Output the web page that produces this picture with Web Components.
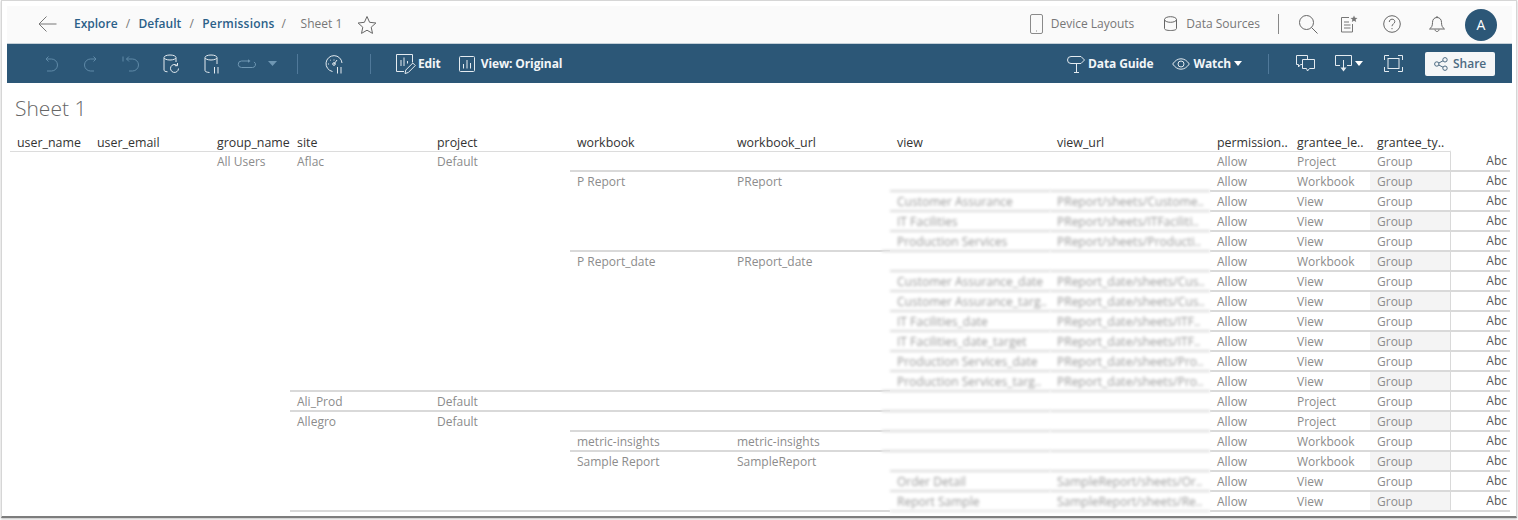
<!DOCTYPE html>
<html>
<head>
<meta charset="utf-8">
<title>Sheet 1</title>
<style>
html, body { margin: 0; background: #fff; height: 520px; overflow: hidden; }
body { font-family: "Open Sans", "Liberation Sans", sans-serif; }
</style>
</head>
<body>
<app-frame>
	<top-bar>
		<ui-icon slot="left" name="back" w="20" h="18" style="margin-left:30px;color:#777"></ui-icon>
		<crumb-trail slot="left" style="margin-left:17px"></crumb-trail>
		<ui-icon slot="left" name="star" w="20" h="20" style="margin:2px 0 0 15px;color:#666"></ui-icon>

		<ui-icon slot="right" name="device" w="13" h="20" style="color:#8a8a8a"></ui-icon>
		<span slot="right" class="lnk" style="margin-left:8px;font-size:12px;color:#777">Device Layouts</span>
		<ui-icon slot="right" name="cylinder" w="13" h="15" style="margin-left:30px;color:#666"></ui-icon>
		<span slot="right" class="lnk" style="margin-left:9px;font-size:12px;color:#777">Data Sources</span>
		<div slot="right" style="margin-left:18px;width:1px;height:20px;background:#888"></div>
		<ui-icon slot="right" name="search" w="20" h="20" style="margin-left:19px;color:#666"></ui-icon>
		<ui-icon slot="right" name="note" w="18" h="18" style="margin-left:22px;color:#777"></ui-icon>
		<ui-icon slot="right" name="help" w="18" h="18" style="margin-left:25px;color:#666"></ui-icon>
		<ui-icon slot="right" name="bell" w="18" h="18" style="margin-left:27px;color:#666"></ui-icon>
		<user-badge slot="right" style="margin:2px 0 0 19px">A</user-badge>
	</top-bar>
	<tool-bar>
		<ui-icon slot="left" name="undo" w="16" h="16" style="margin-left:36px;color:#5f8aa8"></ui-icon>
		<ui-icon slot="left" name="redo" w="16" h="16" style="margin-left:24px;color:#5f8aa8"></ui-icon>
		<ui-icon slot="left" name="revert" w="18" h="16" style="margin-left:23px;color:#5f8aa8"></ui-icon>
		<ui-icon slot="left" name="dbrefresh" w="18" h="20" style="margin-left:23px;color:#e4ebf0"></ui-icon>
		<ui-icon slot="left" name="dbpause" w="16" h="20" style="margin-left:23px;color:#e4ebf0"></ui-icon>
		<ui-icon slot="left" name="pill" w="20" h="10" style="margin-left:17px;color:#6f97b3"></ui-icon>
		<ui-icon slot="left" name="caret" w="9" h="5" style="margin-left:11px;color:#6f97b3"></ui-icon>
		<div slot="left" style="margin-left:20px;width:1px;height:20px;background:#50799a"></div>
		<ui-icon slot="left" name="gauge" w="18" h="20" style="margin-left:27px;color:#e4ebf0"></ui-icon>
		<div slot="left" style="margin-left:27px;width:1px;height:20px;background:#50799a"></div>
		<ui-icon slot="left" name="edit" w="19" h="20" style="margin-left:25px;color:#e4ebf0"></ui-icon>
		<b slot="left" style="margin-left:3px">Edit</b>
		<ui-icon slot="left" name="bars" w="16" h="16" style="margin-left:18px;color:#e4ebf0"></ui-icon>
		<b slot="left" style="margin-left:6px">View: Original</b>

		<ui-icon slot="right" name="sign" w="17" h="18" style="color:#e4ebf0"></ui-icon>
		<b slot="right" style="margin-left:3px">Data Guide</b>
		<ui-icon slot="right" name="eye" w="18" h="12" style="margin-left:19px;color:#e4ebf0"></ui-icon>
		<b slot="right" style="margin-left:3px">Watch</b>
		<ui-icon slot="right" name="caret" w="8" h="5" style="margin-left:3px;color:#fff"></ui-icon>
		<div slot="right" style="margin-left:26px;width:1px;height:20px;background:#50799a"></div>
		<ui-icon slot="right" name="comments" w="19" h="17" style="margin-left:27px;color:#e4ebf0"></ui-icon>
		<ui-icon slot="right" name="download" w="17" h="18" style="margin-left:20px;color:#e4ebf0"></ui-icon>
		<ui-icon slot="right" name="caret" w="8" h="5" style="margin-left:3px;color:#fff"></ui-icon>
		<ui-icon slot="right" name="fit" w="19" h="17" style="margin-left:21px;color:#e4ebf0"></ui-icon>
		<share-button slot="right" style="margin-left:22px">Share</share-button>
	</tool-bar>
	<sheet-view title="Sheet 1">
		<data-table></data-table>
	</sheet-view>
</app-frame>

<script>
const ICONS = {
	back: '<path d="M19.5 9H2M9.5 1.5L2 9l7.5 7.5"/>',
	star: '<path d="M10 1.5l2.6 5.8 6.3.7-4.7 4.2 1.3 6.2L10 15.2l-5.5 3.2 1.3-6.2L1.100 8l6.300-.7z"/>',
	device: '<rect x=".5" y=".5" width="12" height="19" rx="1.500"/><path d="M6 17h1"/>',
	cylinder: '<path d="M.5 3.500v9c0 1.300 2.500 2 6 2s6-.7 6-2v-9"/><ellipse cx="6.500" cy="3.500" rx="6" ry="2.800"/>',
	search: '<circle cx="8.500" cy="8.500" r="7"/><path d="M13.500 13.500l6 6"/>',
	note: '<path d="M9 2.500H1.500v14.500h11V9"/><path d="M4 7h5M4 10h6.500M4 13h6.500"/><path d="M14 .5l1 2.300 2.500.2-1.900 1.600.6 2.400-2.200-1.300-2.200 1.300.6-2.400L10.500 3l2.500-.2z" fill="currentColor" stroke="none"/>',
	help: '<circle cx="9" cy="9" r="8.300"/><path d="M6.300 7c0-1.700 1.200-2.800 2.800-2.800s2.700 1 2.700 2.400c0 2.200-2.800 2.300-2.800 4.600M9 13v1.200"/>',
	bell: '<path d="M9 2.500c-3 0-4.500 2.200-4.500 5 0 3.500-1 5-3 6.500h15c-2-1.500-3-3-3-6.500 0-2.800-1.500-5-4.500-5zM9 1v1.500M7 14.500c0 1.200 1 2 2 2s2-.8 2-2"/>',
	undo: '<path d="M3 3h5.500a6 6 0 0 1 0 12H4"/><path d="M5.500.5L3 3l2.500 2.500" fill="none"/>',
	redo: '<path d="M13 3H7.500a6 6 0 0 0 0 12H11"/><path d="M10.500.5L13 3l-2.500 2.500"/>',
	revert: '<path d="M1 .5v5"/><path d="M4.500 3h6a6 6 0 0 1 0 12H7"/><path d="M7 .5L4.500 3 7 5.500"/>',
	dbrefresh: '<path d="M1 4v12c0 1 1.200 1.600 3.500 1.800M13 4v4"/><ellipse cx="7" cy="3.500" rx="6" ry="2.500"/><path d="M15.500 14.500a4 4 0 1 1-1.300-3M14.500 9v2.700h-2.700"/>',
	dbpause: '<path d="M1 4v12.500c0 1 1.500 1.800 4.500 2M13 4v6"/><ellipse cx="7" cy="3.500" rx="6" ry="2.500"/><path d="M10.500 13v6.500M14 13v6.500"/>',
	pill: '<path d="M12 2H4.500a3 3 0 0 0 0 6.500h11a3 3 0 0 0 1.500-5.600"/><path d="M11 .3L13.500 2 11 3.800" fill="currentColor" stroke="none"/>',
	gauge: '<path d="M7.500 17.500A8 8 0 1 1 17 9"/><path d="M9 5.500v1M4 10H3M5.300 6l.7.7M9 10l3-4"/><circle cx="9" cy="10" r="1.300"/><path d="M12.500 13v6.500M16 13v6.500"/>',
	edit: '<path d="M8 17.500H.5V.5h16v8"/><path d="M5 6v6M8 3.500V12M11.500 7v2.500"/><path d="M9 19.500l.8-3.500 7-7 2.500 2.500-7 7z" fill="none"/>',
	bars: '<rect x=".5" y=".5" width="15" height="15" rx="1"/><path d="M4.500 8v4.500M8 4v8.500M11.500 7v5.500"/>',
	sign: '<path d="M3 1.500h10l3.500 3.500-3.500 3.500H3a3.500 3.500 0 0 1 0-7z"/><path d="M8.500 8.500v9M6 17.500h5"/>',
	eye: '<path d="M.7 6C3 2.500 6 .8 9 .8s6 1.700 8.300 5.200C15 9.500 12 11.200 9 11.200S3 9.500.7 6z"/><circle cx="9" cy="6" r="3"/>',
	comments: '<path d="M6.500 9.500h-2l-2 2.500V9.500h-2V.5h11v4"/><path d="M6.500 4.500h12v9h-5l-2 2.500-1-2.500h-4z"/>',
	download: '<path d="M5 10.500H.5V.5h16v10H12"/><path d="M8.500 5v9"/><path d="M5.500 12.500h6l-3 4z" fill="currentColor" stroke="none"/>',
	fit: '<path d="M.5 5V.5H5M14 .5h4.500V5M18.500 12v4.500H14M5 16.500H.5V12"/><rect x="4" y="3.500" width="11" height="10"/>',
	share: '<circle cx="2.800" cy="7" r="2.200"/><circle cx="11" cy="2.800" r="2.200"/><circle cx="11" cy="11.200" r="2.200"/><path d="M4.800 6l4.200-2.200M4.800 8l4.200 2.200"/>'
};

class UiIcon extends HTMLElement {
	constructor() {
		super();
		this.attachShadow({ mode: 'open' });
	}

	connectedCallback() {
		const w = this.getAttribute('w');
		const h = this.getAttribute('h');
		const name = this.getAttribute('name');
		const body = name === 'caret'
			? `<path d="M0 0h${w}l-${w / 2} ${h}z" fill="currentColor" stroke="none"/>`
			: ICONS[name];
		this.shadowRoot.innerHTML = `
		<style>
		:host { display: block; flex: none; width: ${w}px; height: ${h}px; }
		svg { display: block; overflow: visible; }
		</style>
		<svg width="${w}" height="${h}" viewBox="0 0 ${w} ${h}" fill="none" stroke="currentColor" stroke-width="1">${body}</svg>
		`;
	}
}

class AppFrame extends HTMLElement {
	constructor() {
		super();
		this.attachShadow({ mode: 'open' });
		this.shadowRoot.innerHTML = `
		<style>
		:host {
			display: block;
			box-sizing: border-box;
			margin-left: 1px;
			width: 1516px;
			height: 518px;
			padding: 5px 4px 0 5px;
			background: #fff;
			border: 1px solid #d6d6d6;
			border-bottom: 2px solid #7d7d7d;
			box-shadow: 0 1px 2px rgba(0, 0, 0, 0.25);
		}
		</style>
		<slot></slot>
		`;
	}
}

class TopBar extends HTMLElement {
	constructor() {
		super();
		this.attachShadow({ mode: 'open' });
		this.shadowRoot.innerHTML = `
		<style>
		:host {
			display: flex;
			align-items: center;
			justify-content: space-between;
			box-sizing: border-box;
			height: 38px;
			padding: 0 15px 2px 0;
			background: #fafafa;
			border-bottom: 1px solid #c5d0d8;
		}
		.side { display: flex; align-items: center; }
		</style>
		<div class="side"><slot name="left"></slot></div>
		<div class="side"><slot name="right"></slot></div>
		`;
	}
}

class CrumbTrail extends HTMLElement {
	constructor() {
		super();
		this.attachShadow({ mode: 'open' });
		this.shadowRoot.innerHTML = `
		<style>
		:host { display: flex; align-items: center; font-size: 12px; }
		a { color: #2b6088; font-weight: 600; }
		a:nth-of-type(3) { letter-spacing: 0.2px; }
		i { font-style: normal; color: #777; width: 21px; text-align: center; }
		span { color: #777; margin-left: 8px; }
		i:last-of-type { width: 18px; }
		</style>
		<a>Explore</a><i>/</i><a>Default</a><i>/</i><a>Permissions</a><i>/</i><span>Sheet 1</span>
		`;
	}
}

class UserBadge extends HTMLElement {
	constructor() {
		super();
		this.attachShadow({ mode: 'open' });
		this.shadowRoot.innerHTML = `
		<style>
		:host {
			display: flex;
			align-items: center;
			justify-content: center;
			width: 32px;
			height: 32px;
			border-radius: 50%;
			background: #2c5777;
			color: #fff;
			font-size: 14px;
		}
		</style>
		<slot></slot>
		`;
	}
}

class ToolBar extends HTMLElement {
	constructor() {
		super();
		this.attachShadow({ mode: 'open' });
		this.shadowRoot.innerHTML = `
		<style>
		:host {
			display: flex;
			align-items: center;
			justify-content: space-between;
			box-sizing: border-box;
			height: 39px;
			padding-right: 17px;
			background: #2c5777;
			color: #fff;
			font-size: 12px;
		}
		.side { display: flex; align-items: center; }
		::slotted(b) { font-weight: 700; color: #f2f5f7; letter-spacing: -0.12px; }
		</style>
		<div class="side"><slot name="left"></slot></div>
		<div class="side"><slot name="right"></slot></div>
		`;
	}
}

class ShareButton extends HTMLElement {
	constructor() {
		super();
		this.attachShadow({ mode: 'open' });
		this.shadowRoot.innerHTML = `
		<style>
		:host {
			display: flex;
			align-items: center;
			gap: 5px;
			box-sizing: border-box;
			width: 70px;
			height: 24px;
			padding-left: 9px;
			border-radius: 2px;
			background: #f5f6f7;
			color: #4c6a82;
			font-size: 12px;
			font-weight: 600;
		}
		</style>
		<ui-icon name="share" w="14" h="14"></ui-icon><slot></slot>
		`;
	}
}

class SheetView extends HTMLElement {
	constructor() {
		super();
		this.attachShadow({ mode: 'open' });
		this.shadowRoot.innerHTML = `
		<style>
		:host { display: block; padding-left: 3px; }
		h1 {
			margin: 0;
			height: 49px;
			padding: 12px 0 0 5px;
			box-sizing: border-box;
			font-size: 21px;
			line-height: 27px;
			font-weight: 300;
			color: #666;
		}
		</style>
		<h1>${this.getAttribute('title')}</h1>
		<slot></slot>
		`;
	}
}

// [column, first row, row count, text, line]
const SPANS = [
	[3, 0, 18, 'All Users', false],
	[4, 0, 12, 'Aflac', false], [5, 0, 12, 'Default', false],
	[4, 12, 1, 'Ali_Prod', true], [5, 12, 1, 'Default', true],
	[4, 13, 5, 'Allegro', true], [5, 13, 5, 'Default', true],
	[6, 0, 1, '', false], [7, 0, 1, '', false],
	[6, 1, 4, 'P Report', true], [7, 1, 4, 'PReport', true],
	[6, 5, 7, 'P Report_date', true], [7, 5, 7, 'PReport_date', true],
	[6, 12, 1, '', true], [7, 12, 1, '', true],
	[6, 13, 1, '', true], [7, 13, 1, '', true],
	[6, 14, 1, 'metric-insights', true], [7, 14, 1, 'metric-insights', true],
	[6, 15, 3, 'Sample Report', true], [7, 15, 3, 'SampleReport', true]
];

const VIEWS = [
	[2, 'Customer Assurance', 'PReport/sheets/Custome..'],
	[3, 'IT Facilities', 'PReport/sheets/ITFaciliti..'],
	[4, 'Production Services', 'PReport/sheets/Producti..'],
	[5, '', ''],
	[6, 'Customer Assurance_date', 'PReport_date/sheets/Cus..'],
	[7, 'Customer Assurance_targ..', 'PReport_date/sheets/Cus..'],
	[8, 'IT Facilities_date', 'PReport_date/sheets/ITF..'],
	[9, 'IT Facilities_date_target', 'PReport_date/sheets/ITF..'],
	[10, 'Production Services_date', 'PReport_date/sheets/Pro..'],
	[11, 'Production Services_targ..', 'PReport_date/sheets/Pro..'],
	[12, '', ''], [13, '', ''], [14, '', ''], [15, '', ''],
	[16, 'Order Detail', 'SampleReport/sheets/Or..'],
	[17, 'Report Sample', 'SampleReport/sheets/Re..']
];

const LEVELS = ['Project', 'Workbook', 'View', 'View', 'View', 'Workbook', 'View', 'View', 'View', 'View', 'View', 'View',
	'Project', 'Project', 'Workbook', 'Workbook', 'View', 'View'];

const HEADERS = ['user_name', 'user_email', 'group_name', 'site', 'project', 'workbook', 'workbook_url', 'view', 'view_url', 'permission..', 'grantee_le..', 'grantee_ty..'];

class DataTable extends HTMLElement {
	constructor() {
		super();
		this.attachShadow({ mode: 'open' });
		const cell = (col, row, count, text, cls) =>
			`<div class="c ${cls}" style="grid-column:${col};grid-row:${row + 2} / span ${count}">${text}</div>`;
		let html = HEADERS.map((h, i) => `<div class="h" style="grid-column:${i + 1}">${h}</div>`).join('');
		html += SPANS.map(s => cell(s[0], s[1], s[2], s[3], s[4] ? 'top' : '')).join('');
		// the two rows above the first view have an unblurred line or none
		html += cell(8, 0, 1, '', '') + cell(9, 0, 1, '', '');
		html += cell(8, 1, 1, '', 'top') + cell(9, 1, 1, '', 'top');
		VIEWS.forEach(v => {
			const blank = v[1] === '' ? ' reach' : '';
			html += cell(8, v[0], 1, v[1], 'top soft' + blank) + cell(9, v[0], 1, v[2], 'top soft');
		});
		LEVELS.forEach((level, i) => {
			const line = i ? 'top' : '';
			html += cell(10, i, 1, 'Allow', 'sharp ' + line);
			html += cell(11, i, 1, level, 'sharp ' + line);
			html += cell(12, i, 1, 'Group', 'sharp ' + line + (i % 2 ? ' shade' : ''));
			html += cell(13, i, 1, 'Abc', 'sharp abc ' + line);
		});
		html += '<div class="end" style="grid-column:4 / 8"></div>';
		html += '<div class="end soft" style="grid-column:8 / 10"></div>';
		html += '<div class="end" style="grid-column:10 / 14"></div>';
		this.shadowRoot.innerHTML = `
		<style>
		:host {
			display: grid;
			width: 1500px;
			grid-template-columns: 80px 120px 80px 140px 140px 160px 160px 160px 160px 80px 80px 80px 60px;
			grid-template-rows: 18px repeat(18, 20px) 2px;
			font-size: 12px;
			color: #8c8c8c;
		}
		.h {
			grid-row: 1;
			z-index: 1;
			box-sizing: border-box;
			height: 20px;
			padding: 2px 0 0 7px;
			font-size: 12.4px;
			line-height: 17px;
			color: #333;
			white-space: nowrap;
			border-bottom: 1px solid #dcdcdc;
		}
		.h:nth-child(12) { grid-column-end: span 2 !important; }
		.c {
			box-sizing: border-box;
			padding: 2px 0 0 7px;
			line-height: 16px;
			white-space: nowrap;
			overflow: hidden;
			border-top: 2px solid transparent;
		}
		.top { border-top-color: #d9d9d9; }
		.soft { filter: blur(1.5px); color: #999; background: #fff; }
		.reach { margin-left: -8px; }
		.sharp { background: #fff; }
		.shade { background: #f4f4f4; }
		.abc {
			padding: 1px 3px 0 0;
			text-align: right;
			color: #555;
			border-left: 1px solid #d9d9d9;
		}
		.end { grid-row: 20; background: #d9d9d9; }
		.end.soft { background: #e2e2e2; }
		</style>
		${html}
		`;
	}
}

customElements.define('ui-icon', UiIcon);
customElements.define('app-frame', AppFrame);
customElements.define('top-bar', TopBar);
customElements.define('crumb-trail', CrumbTrail);
customElements.define('user-badge', UserBadge);
customElements.define('tool-bar', ToolBar);
customElements.define('share-button', ShareButton);
customElements.define('sheet-view', SheetView);
customElements.define('data-table', DataTable);
</script>
</body>
</html>
